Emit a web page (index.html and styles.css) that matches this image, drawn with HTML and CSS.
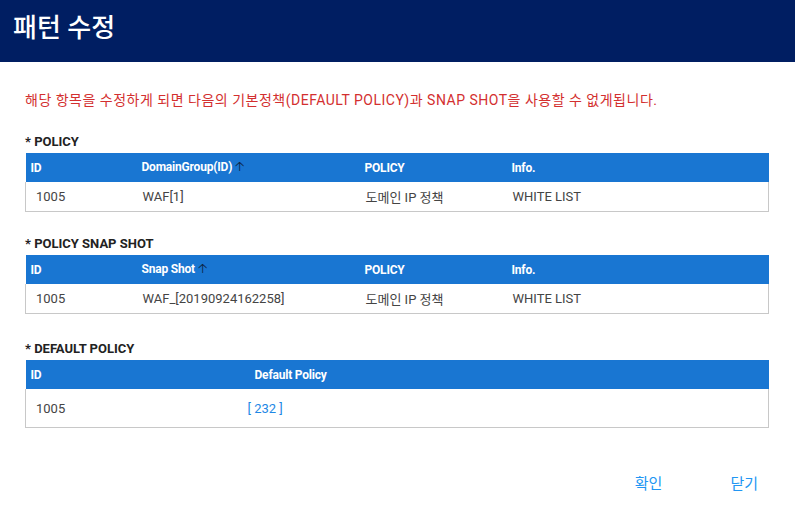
FILE: index.html
```html
<!DOCTYPE html>
<html lang="ko">
<head>
    <meta charset="UTF-8">
    <title>패턴 수정</title>
    <link rel="stylesheet" href="styles.css">
</head>
<body>
    <div class="dialog">
        <div class="dialog-title">패턴 수정</div>
        <div class="dialog-body">
            <p class="warning">해당 항목을 수정하게 되면 다음의 기본정책(DEFAULT POLICY)과 SNAP SHOT을 사용할 수 없게됩니다.</p>

            <div class="section">
                <div class="section-title">* POLICY</div>
                <table class="grid">
                    <colgroup>
                        <col class="c-id"><col class="c-name"><col class="c-policy"><col>
                    </colgroup>
                    <thead>
                        <tr>
                            <th>ID</th>
                            <th>DomainGroup(ID)<span class="sort">&#x1F861;</span></th>
                            <th>POLICY</th>
                            <th>Info.</th>
                        </tr>
                    </thead>
                    <tbody>
                        <tr>
                            <td>1005</td>
                            <td>WAF[1]</td>
                            <td>도메인 IP 정책</td>
                            <td>WHITE LIST</td>
                        </tr>
                    </tbody>
                </table>
            </div>

            <div class="section">
                <div class="section-title">* POLICY SNAP SHOT</div>
                <table class="grid">
                    <colgroup>
                        <col class="c-id"><col class="c-name"><col class="c-policy"><col>
                    </colgroup>
                    <thead>
                        <tr>
                            <th>ID</th>
                            <th>Snap Shot<span class="sort">&#x1F861;</span></th>
                            <th>POLICY</th>
                            <th>Info.</th>
                        </tr>
                    </thead>
                    <tbody>
                        <tr>
                            <td>1005</td>
                            <td>WAF_[20190924162258]</td>
                            <td>도메인 IP 정책</td>
                            <td>WHITE LIST</td>
                        </tr>
                    </tbody>
                </table>
            </div>

            <div class="section default">
                <div class="section-title">* DEFAULT POLICY</div>
                <table class="grid tall">
                    <colgroup>
                        <col class="c-half"><col>
                    </colgroup>
                    <thead>
                        <tr>
                            <th>ID</th>
                            <th>Default Policy</th>
                        </tr>
                    </thead>
                    <tbody>
                        <tr>
                            <td>1005</td>
                            <td><a class="link" href="#">[ 232 ]</a></td>
                        </tr>
                    </tbody>
                </table>
            </div>
        </div>
        <div class="dialog-actions">
            <button class="text-btn">확인</button>
            <button class="text-btn">닫기</button>
        </div>
    </div>
</body>
</html>
```

FILE: styles.css
```css
body {
    margin: 0;
    padding: 0;
    font-family: Roboto, "Noto Sans CJK KR", sans-serif;
    background-color: white;
    color: #333;
}
.dialog {
    width: 795px;
}
.dialog-title {
    height: 62px;
    background-color: #001e62;
    color: white;
    font-size: 26px;
    font-weight: 500;
    line-height: 56px;
    padding-left: 13px;
    box-sizing: border-box;
}
.dialog-body {
    padding: 0 26px 0 25px;
}
.warning {
    margin: 28px 0 24px;
    color: #d32f2f;
    font-size: 14px;
    line-height: 20px;
    letter-spacing: 0.5px;
}
.section {
    margin-bottom: 24px;
}
.section.default {
    margin-top: 27px;
}
.section-title {
    font-size: 13px;
    font-weight: bold;
    color: #222;
    line-height: 16px;
    margin-bottom: 3px;
}
.grid {
    width: 744px;
    border-collapse: collapse;
    table-layout: fixed;
    font-size: 13px;
}
.c-id { width: 111px; }
.c-name { width: 223px; }
.c-policy { width: 147px; }
.c-half { width: 222px; }
.grid th {
    background-color: #1976d2;
    color: white;
    font-size: 12px;
    font-weight: bold;
    text-align: left;
    height: 29px;
    padding: 0 0 0 5px;
    border: none;
    letter-spacing: -0.2px;
}
.grid.tall th:last-child {
    padding-left: 7px;
}
.grid td {
    height: 29px;
    padding: 0 0 0 6px;
    border-bottom: 1px solid #c8c8c8;
    color: #444;
}
.grid td:first-child {
    padding-left: 10px;
    border-left: 1px solid #c8c8c8;
}
.grid td:last-child {
    border-right: 1px solid #c8c8c8;
}
.grid.tall td {
    height: 38px;
}
.grid.tall td:last-child {
    padding-left: 0;
}
.sort {
    color: #0b1f3d;
    font-size: 13px;
    font-weight: normal;
    margin-left: 3px;
}
.link {
    color: #1e88e5;
    text-decoration: none;
}
.dialog-actions {
    display: flex;
    justify-content: flex-end;
    gap: 40px;
    padding: 14px 23px 0 0;
}
.text-btn {
    background: none;
    border: none;
    font-family: Roboto, "Noto Sans CJK KR", sans-serif;
    font-size: 15px;
    color: #2196f3;
    padding: 6px 14px;
    cursor: pointer;
}
```
